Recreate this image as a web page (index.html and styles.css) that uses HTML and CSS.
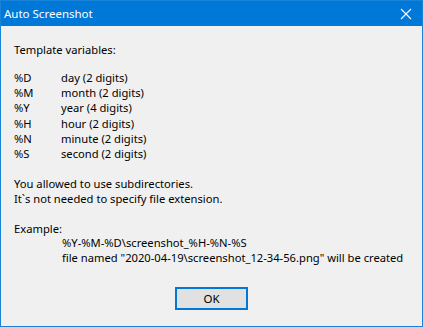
FILE: index.html
```
<!DOCTYPE html>
<html>
    <head>
        <title>Auto Screenshot</title>
        <link rel="stylesheet" href="styles.css">
    </head>
    <body>
        <div class="window">
            <div class="titlebar">
                <span class="title">Auto Screenshot</span>
                <span class="close">
                    <svg width="12" height="12" viewBox="0 0 12 12">
                        <path d="M1 1 L11 11 M11 1 L1 11" stroke="#fff" stroke-width="1.1" fill="none"/>
                    </svg>
                </span>
            </div>
            <div class="content">
                <p class="head">Template variables:</p>

                <div class="vars">
                    <div class="row"><span class="key">%D</span><span>day (2 digits)</span></div>
                    <div class="row"><span class="key">%M</span><span>month (2 digits)</span></div>
                    <div class="row"><span class="key">%Y</span><span>year (4 digits)</span></div>
                    <div class="row"><span class="key">%H</span><span>hour (2 digits)</span></div>
                    <div class="row"><span class="key">%N</span><span>minute (2 digits)</span></div>
                    <div class="row"><span class="key">%S</span><span>second (2 digits)</span></div>
                </div>

                <div class="notes">
                    <p>You allowed to use subdirectories.</p>
                    <p>It`s not needed to specify file extension.</p>
                </div>

                <div class="example">
                    <p>Example:</p>
                    <p class="indent">%Y-%M-%D\screenshot_%H-%N-%S</p>
                    <p class="indent">file named "2020-04-19\screenshot_12-34-56.png" will be created</p>
                </div>
            </div>
            <div class="buttons">
                <button class="ok">OK</button>
            </div>
        </div>
    </body>
</html>
```
FILE: styles.css
```
html, body{
    margin: 0;
    padding: 0;
}
body{
    width: 423px;
    height: 327px;
    font-family: "Noto Sans", "Open Sans", sans-serif;
    font-size: 11.2px;
    color: #000;
}
p{
    margin: 0;
}
.window{
    box-sizing: border-box;
    width: 423px;
    height: 327px;
    border: 1px solid #1883d7;
    background-color: #f0f0f0;
    display: flex;
    flex-direction: column;
}
.titlebar{
    height: 25px;
    background-color: #0078d7;
    color: #fff;
    font-size: 11.5px;
    display: flex;
    align-items: center;
    justify-content: space-between;
    padding-left: 3px;
}
.close{
    width: 32px;
    height: 25px;
    display: flex;
    align-items: center;
    justify-content: center;
    margin-top: 1px;
}
.close svg{
    display: block;
}
.content{
    padding: 16px 0 0 13px;
    line-height: 15px;
}
.vars{
    margin-top: 13px;
}
.row{
    display: flex;
    height: 15.2px;
    line-height: 15.2px;
}
.key{
    width: 47px;
}
.notes{
    margin-top: 15px;
}
.example{
    margin-top: 15px;
}
.indent{
    padding-left: 48px;
    line-height: 14.5px;
}
.buttons{
    display: flex;
    justify-content: center;
    margin-top: auto;
    margin-bottom: 16px;
}
.ok{
    width: 73px;
    height: 23px;
    box-sizing: border-box;
    border: 2px solid #0078d7;
    background-color: #e1e1e1;
    font-family: "Noto Sans", "Open Sans", sans-serif;
    font-size: 11.5px;
    color: #000;
    padding: 0;
}
```
